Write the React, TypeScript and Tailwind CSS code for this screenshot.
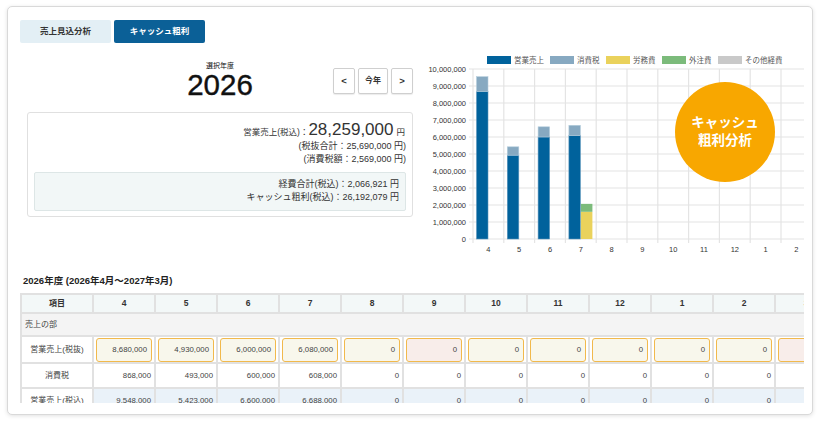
import React from 'react';

const months = ['4', '5', '6', '7', '8', '9', '10', '11', '12', '1', '2', '3'];
const sales = [8680000, 4930000, 6000000, 6080000, 0, 0, 0, 0, 0, 0, 0, 0];
const tax = [868000, 493000, 600000, 608000, 0, 0, 0, 0, 0, 0, 0, 0];
const labor = [0, 0, 0, 1600000, 0, 0, 0, 0, 0, 0, 0, 0];
const outsource = [0, 0, 0, 466921, 0, 0, 0, 0, 0, 0, 0, 0];
const pinkMonths = [5, 11];

const fmt = (n: number) => n.toLocaleString('en-US');

const legend = [
  { label: '営業売上', color: '#00629c' },
  { label: '消費税', color: '#87a9c1' },
  { label: '労務費', color: '#ead25c' },
  { label: '外注費', color: '#7cbb7b' },
  { label: 'その他経費', color: '#c9c9c9' },
];

function Chart() {
  const x0 = 48;
  const colW = 30.8;
  const zeroY = 219;
  const perM = 17;
  const h = (v: number) => (v / 1000000) * perM;

  return (
    <svg width={379} height={245} className="block">
      {/* legend */}
      {legend.map((l, i) => {
        const bx = [62, 125, 181, 237, 293][i];
        return (
          <g key={l.label}>
            <rect x={bx} y={36} width={24} height={8} fill={l.color} />
            <text x={bx + 27} y={43} fontSize={7.5} fill="#555">
              {l.label}
            </text>
          </g>
        );
      })}

      {/* grid */}
      {Array.from({ length: 11 }).map((_, i) => {
        const y = 49 + i * perM;
        return (
          <g key={i}>
            <line x1={44} x2={379} y1={y} y2={y} stroke="#e4e4e4" strokeWidth={1.2} />
            <text x={41} y={y + 2.7} fontSize={7.5} fill="#333" textAnchor="end">
              {fmt((10 - i) * 1000000)}
            </text>
          </g>
        );
      })}
      {Array.from({ length: 13 }).map((_, k) => {
        const x = x0 + k * colW;
        return <line key={k} x1={x} x2={x} y1={49} y2={223} stroke="#e4e4e4" strokeWidth={1.2} />;
      })}

      {/* bars */}
      {months.map((m, i) => {
        const cx = x0 + i * colW;
        const s = h(sales[i]);
        const t = h(tax[i]);
        const lb = h(labor[i]);
        const os = h(outsource[i]);
        return (
          <g key={m}>
            {s > 0 && <rect x={cx + 3.5} y={zeroY - s} width={11.5} height={s} fill="#00629c" stroke="#5d97bd" strokeWidth={0.6} />}
            {t > 0 && <rect x={cx + 3.5} y={zeroY - s - t} width={11.5} height={t} fill="#87a9c1" stroke="#b5cddd" strokeWidth={0.6} />}
            {lb > 0 && <rect x={cx + 15.5} y={zeroY - lb} width={11.5} height={lb} fill="#ead25c" />}
            {os > 0 && <rect x={cx + 15.5} y={zeroY - lb - os} width={11.5} height={os} fill="#7cbb7b" />}
            <text x={cx + colW / 2} y={232} fontSize={7.5} fill="#333" textAnchor="middle">
              {m}
            </text>
          </g>
        );
      })}
    </svg>
  );
}

function Summary() {
  return (
    <div className="mx-[7px] mt-[13px] rounded-[3px] border border-[#e0e0e0] bg-white px-[6px] pt-[7px] pb-[5px] text-[#333]">
      <div className="flex h-[20px] items-baseline justify-end pr-[1px]">
        <span className="text-[8.5px]">営業売上(税込)：</span>
        <span className="text-[17px] leading-[20px]">28,259,000</span>
        <span className="ml-[3px] text-[8.5px]">円</span>
      </div>
      <div className="text-right text-[9px] leading-[13px]">(税抜合計：25,690,000 円)</div>
      <div className="text-right text-[9px] leading-[13px]">(消費税額：2,569,000 円)</div>
      <div className="mt-[6px] rounded-[2px] border border-[#dde6e6] bg-[#f2f7f7] pt-[5px] pr-[6px] pb-[6px] text-right text-[9px] leading-[13px]">
        <div>経費合計(税込)：2,066,921 円</div>
        <div>キャッシュ粗利(税込)：26,192,079 円</div>
      </div>
    </div>
  );
}

function DataTable() {
  return (
    <table className="w-[816px] table-fixed border-collapse text-[#444]">
      <colgroup>
        <col className="w-[72px]" />
        {months.map((m) => (
          <col key={m} className="w-[62px]" />
        ))}
      </colgroup>
      <thead>
        <tr className="h-[19px] bg-[#f3f8f8]">
          <th className="border-2 border-[#e1e1e1] text-[8px] font-bold text-[#333]">項目</th>
          {months.map((m) => (
            <th key={m} className="border-2 border-[#e1e1e1] text-[8.5px] font-bold text-[#333]">
              {m}
            </th>
          ))}
        </tr>
      </thead>
      <tbody>
        <tr className="h-[23px] bg-[#f4f4f4]">
          <td colSpan={13} className="border-2 border-[#e1e1e1] pl-[3px] text-[8px]">
            売上の部
          </td>
        </tr>
        <tr className="h-[27px]">
          <td className="border-2 border-[#e1e1e1] text-center text-[8px]">営業売上(税抜)</td>
          {sales.map((v, i) => (
            <td key={i} className="border-2 border-[#e1e1e1] px-[2px] py-0">
              <div
                className={`flex h-[24px] items-center justify-end rounded-[3px] border-[1.5px] border-[#f1b94c] pr-[4px] text-[7.8px] ${
                  pinkMonths.includes(i) ? 'bg-[#f8edea]' : 'bg-[#f8f7ec]'
                }`}
              >
                {fmt(v)}
              </div>
            </td>
          ))}
        </tr>
        <tr className="h-[25px]">
          <td className="border-2 border-[#e1e1e1] text-center text-[8px]">消費税</td>
          {tax.map((v, i) => (
            <td key={i} className="border-2 border-[#e1e1e1] pr-[3px] text-right text-[7.8px]">
              {fmt(v)}
            </td>
          ))}
        </tr>
        <tr className="h-[25px]">
          <td className="border-2 border-[#e1e1e1] bg-white text-center text-[8px]">営業売上(税込)</td>
          {sales.map((v, i) => (
            <td key={i} className="border-2 border-[#e1e1e1] bg-[#eaf2f9] pr-[3px] text-right text-[7.8px]">
              {fmt(v + tax[i])}
            </td>
          ))}
        </tr>
      </tbody>
    </table>
  );
}

export default function App() {
  return (
    <div className="h-[424px] w-[822px] bg-white pt-[6px] pl-[7px] font-['Liberation_Sans','Noto_Sans_CJK_JP',sans-serif]">
      <div className="h-[409px] w-[806px] rounded-[5px] border border-[#d9d9d9] bg-white pt-[13px] pr-[8px] pl-[12px] shadow-[0_1px_4px_rgba(0,0,0,0.12)]">
        <div className="relative h-[383px] overflow-hidden">
          {/* top section */}
          <div className="flex h-[254px]">
            <div className="w-[400px] shrink-0">
              <div className="flex gap-[3px]">
                <div className="flex h-[23px] w-[91px] items-center justify-center rounded-[2px] bg-[#e3eff5] text-[8.5px] font-bold text-[#333]">
                  売上見込分析
                </div>
                <div className="flex h-[23px] w-[91px] items-center justify-center rounded-[2px] bg-[#0b6097] text-[8.5px] font-bold text-white">
                  キャッシュ粗利
                </div>
              </div>

              <div className="mt-[18px] grid grid-cols-[1fr_auto_1fr]">
                <div />
                <div className="text-center text-[#111]">
                  <div className="text-[7px] leading-[10px]">選択年度</div>
                  <div className="text-[29.5px] leading-[28px] [-webkit-text-stroke:0.4px_#111]">2026</div>
                </div>
                <div className="flex items-start justify-end gap-[3px] pt-[7px] pr-[7px]">
                  <button className="h-[26px] w-[22px] rounded-[2px] border border-[#cfcfcf] bg-white text-[9.5px] font-bold text-[#333] shadow-[0_1px_1px_rgba(0,0,0,0.08)]">
                    &lt;
                  </button>
                  <button className="h-[26px] w-[30px] rounded-[2px] border border-[#cfcfcf] bg-white text-[8px] font-bold text-[#333] shadow-[0_1px_1px_rgba(0,0,0,0.08)]">
                    今年
                  </button>
                  <button className="h-[26px] w-[22px] rounded-[2px] border border-[#cfcfcf] bg-white text-[9.5px] font-bold text-[#333] shadow-[0_1px_1px_rgba(0,0,0,0.08)]">
                    &gt;
                  </button>
                </div>
              </div>

              <Summary />
            </div>

            <div className="ml-[5px]">
              <Chart />
            </div>
          </div>

          {/* badge over chart */}
          <div className="absolute top-[62px] left-[655px] flex h-[100px] w-[100px] flex-col items-center justify-center rounded-full bg-[#f8a700] text-[13.5px] leading-[18.5px] font-bold text-white">
            <span>キャッシュ</span>
            <span>粗利分析</span>
          </div>

          {/* table */}
          <div className="h-[14px] pl-[3px] text-[9.5px] leading-[14px] font-bold text-[#222]">
            2026年度 (2026年4月〜2027年3月)
          </div>
          <div className="mt-[5px]">
            <DataTable />
          </div>
        </div>
      </div>
    </div>
  );
}
